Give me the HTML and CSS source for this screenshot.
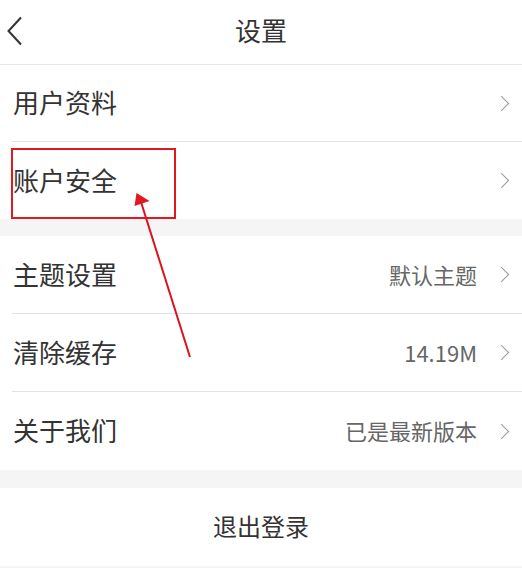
FILE: index.html
```html
<!DOCTYPE html>
<html lang="zh-CN">
<head>
    <meta charset="UTF-8">
    <meta name="viewport" content="width=device-width, initial-scale=1.0">
    <title>设置</title>
    <link rel="stylesheet" href="styles.css">
</head>
<body>
    <div class="page">
        <div class="header">
            <svg class="back" width="16" height="30" viewBox="0 0 16 30">
                <polyline points="14,1.5 1.5,15 14,28.5" fill="none" stroke="#333" stroke-width="2"/>
            </svg>
            <div class="title">设置</div>
        </div>

        <div class="group first">
            <div class="row">
                <div class="label">用户资料</div>
                <div class="right"><span class="arrow"></span></div>
            </div>
            <div class="row">
                <div class="label">账户安全</div>
                <div class="right"><span class="arrow"></span></div>
            </div>
        </div>

        <div class="group">
            <div class="row">
                <div class="label">主题设置</div>
                <div class="right"><span class="value">默认主题</span><span class="arrow"></span></div>
            </div>
            <div class="row">
                <div class="label">清除缓存</div>
                <div class="right"><span class="value">14.19M</span><span class="arrow"></span></div>
            </div>
            <div class="row">
                <div class="label">关于我们</div>
                <div class="right"><span class="value">已是最新版本</span><span class="arrow"></span></div>
            </div>
        </div>

        <div class="group">
            <div class="logout">退出登录</div>
        </div>

        <!-- 标注 -->
        <svg class="mark" width="522" height="568" viewBox="0 0 522 568">
            <rect x="12" y="149" width="163" height="69" fill="none" stroke="#e3181e" stroke-width="2"/>
            <line x1="190" y1="357" x2="141" y2="202" stroke="#d9141a" stroke-width="2"/>
            <polygon points="136.5,193 134.5,206 149.5,201" fill="#e3181e"/>
        </svg>
    </div>
</body>
</html>
```

FILE: styles.css
```css
body{
    margin: 0;
    background-color: #f5f5f5;
    font-family: "Noto Sans CJK SC", "Noto Sans", sans-serif;
    color: #333;
}
.page{
    position: relative;
    width: 522px;
    height: 568px;
    overflow: hidden;
}
.header{
    height: 64px;
    background-color: #fff;
    border-bottom: 1px solid #e8e8e8;
    display: flex;
    align-items: center;
    justify-content: center;
    position: relative;
}
.back{
    position: absolute;
    left: 7px;
    top: 16px;
}
.title{
    font-size: 26px;
    line-height: 1;
    padding-bottom: 4px;
}
.group{
    background-color: #fff;
    margin-bottom: 18px;
}
.first{
    margin-bottom: 17px;
}
.row{
    height: 78px;
    box-sizing: border-box;
    margin-left: 12px;
    padding-right: 11px;
    display: flex;
    align-items: center;
    justify-content: space-between;
    border-bottom: 1px solid #e3e3e3;
}
.first .row{
    height: 77px;
}
.row:last-child{
    border-bottom: none;
}
.label{
    font-size: 26px;
    line-height: 1;
    margin-left: 1px;
    padding-bottom: 2px;
}
.right{
    display: flex;
    align-items: center;
}
.value{
    font-size: 22px;
    color: #666;
    margin-right: 19px;
    padding-bottom: 2px;
}
.arrow{
    width: 10px;
    height: 10px;
    border-top: 1.5px solid #999;
    border-right: 1.5px solid #999;
    transform: rotate(45deg);
    margin-right: 4px;
}
.logout{
    height: 78px;
    display: flex;
    align-items: center;
    justify-content: center;
    font-size: 24px;
    padding-bottom: 3px;
    box-sizing: border-box;
}
.mark{
    position: absolute;
    left: 0;
    top: 0;
    pointer-events: none;
}
```
